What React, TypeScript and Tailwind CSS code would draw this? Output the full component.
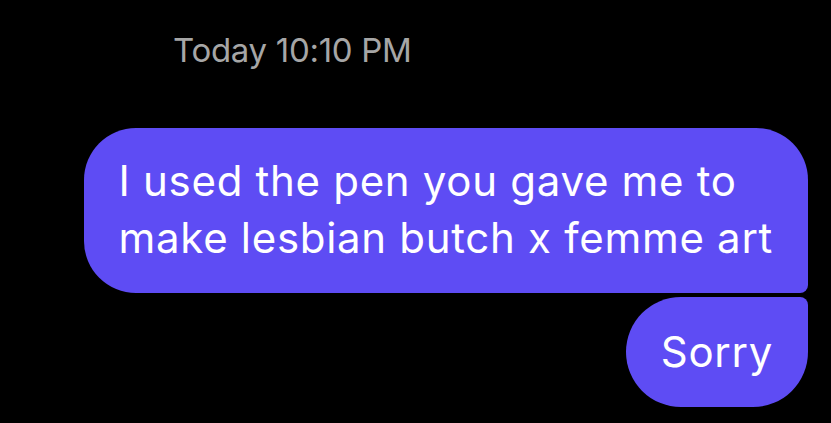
export default function App() {
  return (
    <div
      className="w-[831px] h-[423px] bg-black overflow-hidden flex flex-col"
      style={{ fontFamily: "Inter, 'Noto Sans', sans-serif" }}
    >
      <div className="pl-[173px] pt-[26px] text-[33px] leading-[48px] text-[#a6a6a6] tracking-[-0.3px]">
        Today 10:10 PM
      </div>
      <div className="flex flex-col items-end pr-[23px] mt-[54px] gap-[4px]">
        <div className="bg-[#5e4cf4] text-white text-[42px] leading-[57px] tracking-[0.7px] px-[35px] pt-[24px] pb-[27px] rounded-[52px] rounded-br-[8px]">
          I used the pen you gave me to
          <br />
          make lesbian butch x femme art
        </div>
        <div className="bg-[#5e4cf4] text-white text-[42px] leading-[57px] tracking-[0.7px] px-[35px] pt-[26px] pb-[27px] rounded-[55px] rounded-tr-[8px]">
          Sorry
        </div>
      </div>
    </div>
  );
}
